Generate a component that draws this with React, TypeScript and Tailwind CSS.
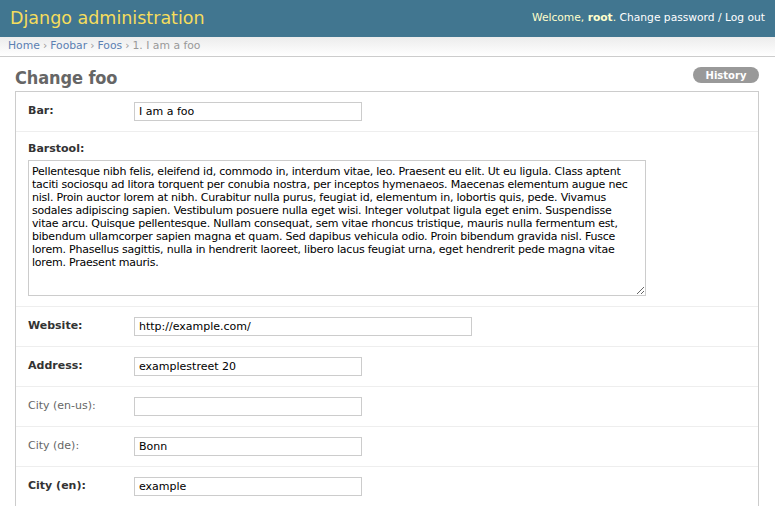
import React from "react";

const BARSTOOL = [
  "Pellentesque nibh felis, eleifend id, commodo in, interdum vitae, leo. Praesent eu elit. Ut eu ligula. Class aptent",
  "taciti sociosqu ad litora torquent per conubia nostra, per inceptos hymenaeos. Maecenas elementum augue nec",
  "nisl. Proin auctor lorem at nibh. Curabitur nulla purus, feugiat id, elementum in, lobortis quis, pede. Vivamus",
  "sodales adipiscing sapien. Vestibulum posuere nulla eget wisi. Integer volutpat ligula eget enim. Suspendisse",
  "vitae arcu. Quisque pellentesque. Nullam consequat, sem vitae rhoncus tristique, mauris nulla fermentum est,",
  "bibendum ullamcorper sapien magna et quam. Sed dapibus vehicula odio. Proin bibendum gravida nisl. Fusce",
  "lorem. Phasellus sagittis, nulla in hendrerit laoreet, libero lacus feugiat urna, eget hendrerit pede magna vitae",
  "lorem. Praesent mauris.",
].join("\n");

function Row({
  label,
  required,
  value,
  wide,
}: {
  label: string;
  required?: boolean;
  value: string;
  wide?: boolean;
}) {
  return (
    <div className="flex items-center px-[12px] py-[10px] border-b border-[#eee]">
      <label
        className={`w-[106px] text-[11px] ${
          required ? "font-bold text-[#333]" : "text-[#666]"
        }`}
      >
        {label}
      </label>
      <input
        type="text"
        defaultValue={value}
        className={`h-[19px] ${
          wide ? "w-[338px]" : "w-[228px]"
        } border border-[#ccc] px-[4px] text-[11px] text-black outline-none`}
      />
    </div>
  );
}

export default function App() {
  return (
    <div className="w-[775px] h-[506px] overflow-hidden bg-white font-['DejaVu_Sans',sans-serif] text-[#333]">
      {/* Header */}
      <div className="h-[37px] bg-[#417690] flex items-center justify-between pl-[10px] pr-[10px]">
        <div className="text-[17.5px] text-[#f5dd5d] leading-none">Django administration</div>
        <div className="text-[10.7px] text-white">
          <span className="text-[#ffc]">
            Welcome, <strong>root</strong>.
          </span>{" "}
          Change password / Log out
        </div>
      </div>
      {/* Breadcrumbs */}
      <div className="h-[20px] bg-gradient-to-b from-[#ececec] to-white border-b border-[#ccc] flex items-center px-[8px] text-[10.8px] text-[#999]">
        <span className="text-[#5b80b2]">Home</span>
        <span className="mx-[3px]">›</span>
        <span className="text-[#5b80b2]">Foobar</span>
        <span className="mx-[3px]">›</span>
        <span className="text-[#5b80b2]">Foos</span>
        <span className="mx-[3px]">›</span>
        <span>1. I am a foo</span>
      </div>
      {/* Content */}
      <div className="pl-[15px] pr-[16px]">
        <div className="h-[34px] flex items-center justify-between">
          <h1 className="text-[18px] font-bold text-[#666] leading-none mt-[7px] tracking-[-0.1px] font-['DejaVu_Sans_Condensed','DejaVu_Sans',sans-serif]">
            Change foo
          </h1>
          <div className="h-[16px] w-[66px] rounded-full bg-[#999] text-white text-[10px] font-bold flex items-center justify-center mt-[2px]">
            History
          </div>
        </div>
        <div className="border border-[#ccc] border-b-0">
          <Row label="Bar:" required value="I am a foo" />
          <div className="px-[12px] pt-[10px] pb-[10px] border-b border-[#eee]">
            <label className="block text-[11px] font-bold text-[#333] leading-[14px] mb-[4px]">
              Barstool:
            </label>
            <textarea
              defaultValue={BARSTOOL}
              wrap="off"
              className="block w-[618px] h-[136px] border border-[#ccc] px-[3px] pt-[4px] pb-[2px] text-[11px] leading-[13px] tracking-[-0.22px] text-black overflow-hidden outline-none"
            />
          </div>
          <Row label="Website:" required value="http://example.com/" wide />
          <Row label="Address:" required value="examplestreet 20" />
          <Row label="City (en-us):" value="" />
          <Row label="City (de):" value="Bonn" />
          <Row label="City (en):" required value="example" />
        </div>
      </div>
    </div>
  );
}
